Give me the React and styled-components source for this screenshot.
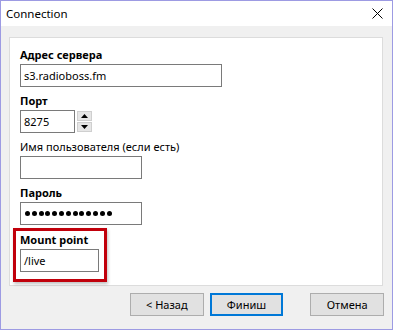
import React from 'react';
import styled, { createGlobalStyle } from 'styled-components';

const GlobalStyle = createGlobalStyle`
  html, body {
    margin: 0;
    padding: 0;
    background: #ffffff;
  }
  * {
    box-sizing: border-box;
  }
`;

const Window = styled.div`
  width: 393px;
  height: 330px;
  border: 1px solid #9d9be3;
  background: #f0f0f0;
  display: flex;
  flex-direction: column;
  font-family: 'Noto Sans', 'Open Sans', sans-serif;
  font-size: 11px;
  color: #000;
`;

const TitleBar = styled.div`
  height: 25px;
  background: #ffffff;
  display: flex;
  align-items: center;
  justify-content: space-between;
  padding-left: 5px;
`;

const Title = styled.span`
  font-size: 11.5px;
`;

const CloseButton = styled.div`
  width: 32px;
  height: 25px;
  display: flex;
  align-items: center;
  justify-content: center;
  margin-right: -1px;
`;

const Body = styled.div`
  flex: 1;
  padding: 11px 9px 0 8px;
  display: flex;
  flex-direction: column;
`;

const Panel = styled.div`
  height: 249px;
  background: #ffffff;
  border: 1px solid #dcdcdc;
  padding: 9px 10px 0 10px;
  display: flex;
  flex-direction: column;
  align-items: flex-start;
`;

const Group = styled.div`
  display: flex;
  flex-direction: column;
  margin-bottom: ${(p) => (p.$last ? 0 : 6)}px;
`;

const Label = styled.label`
  height: 16px;
  line-height: 16px;
  margin-bottom: 1px;
  font-weight: ${(p) => (p.$bold ? 700 : 400)};
  white-space: nowrap;
`;

const Input = styled.div`
  width: ${(p) => p.$w}px;
  height: 23px;
  border: 1px solid #7a7a7a;
  background: #fff;
  padding: 0 3px;
  display: flex;
  align-items: center;
  font-size: 11px;
  white-space: nowrap;
  overflow: hidden;
`;

const Dots = styled.div`
  display: flex;
  gap: 1.8px;
  padding-left: 1px;
`;

const Dot = styled.span`
  width: 5px;
  height: 5px;
  border-radius: 50%;
  background: #000;
`;

const Row = styled.div`
  display: flex;
  align-items: center;
  gap: 2px;
`;

const Spinner = styled.div`
  display: flex;
  flex-direction: column;
  gap: 1px;
  margin-top: -1px;
`;

const SpinBtn = styled.div`
  width: 15px;
  height: 10px;
  background: #e6e6e6;
  border: 1px solid #cfcfcf;
  display: flex;
  align-items: center;
  justify-content: center;
`;

const Highlight = styled.div`
  margin: -3px 0 0 -7px;
  border: 3px solid #c1000b;
  padding: 1px 5px 7px 4px;
  box-shadow: 1px 2px 3px rgba(0, 0, 0, 0.25);
`;

const Footer = styled.div`
  display: flex;
  padding: 7px 0 0 0;
  margin-right: -1px;
`;

const Button = styled.div`
  width: 74px;
  height: 23px;
  background: #e1e1e1;
  border: ${(p) => (p.$default ? '2px solid #0078d7' : '1px solid #adadad')};
  display: flex;
  align-items: center;
  justify-content: center;
  margin-left: ${(p) => p.$ml}px;
  font-size: 11px;
`;

const Arrow = ({ down }) => (
  <svg width="7" height="4" viewBox="0 0 7 4">
    {down ? <polygon points="0,0 7,0 3.5,4" fill="#000" /> : <polygon points="0,4 7,4 3.5,0" fill="#000" />}
  </svg>
);

export default function App() {
  return (
    <>
      <GlobalStyle />
      <Window>
        <TitleBar>
          <Title>Connection</Title>
          <CloseButton>
            <svg width="11" height="11" viewBox="0 0 11 11">
              <path d="M0.5 0.5 L10.5 10.5 M10.5 0.5 L0.5 10.5" stroke="#000" strokeWidth="1" />
            </svg>
          </CloseButton>
        </TitleBar>
        <Body>
          <Panel>
            <Group>
              <Label $bold>Адрес сервера</Label>
              <Input $w={202}>s3.radioboss.fm</Input>
            </Group>
            <Group>
              <Label $bold>Порт</Label>
              <Row>
                <Input $w={55}>8275</Input>
                <Spinner>
                  <SpinBtn><Arrow /></SpinBtn>
                  <SpinBtn><Arrow down /></SpinBtn>
                </Spinner>
              </Row>
            </Group>
            <Group>
              <Label>Имя пользователя (если есть)</Label>
              <Input $w={122} />
            </Group>
            <Group>
              <Label $bold>Пароль</Label>
              <Input $w={122}>
                <Dots>
                  {Array.from({ length: 13 }).map((_, i) => (
                    <Dot key={i} />
                  ))}
                </Dots>
              </Input>
            </Group>
            <Highlight>
              <Group $last>
                <Label $bold>Mount point</Label>
                <Input $w={79}>/live</Input>
              </Group>
            </Highlight>
          </Panel>
          <Footer>
            <Button $ml={121}>&lt; Назад</Button>
            <Button $ml={6} $default>Финиш</Button>
            <Button $ml={27}>Отмена</Button>
          </Footer>
        </Body>
      </Window>
    </>
  );
}
